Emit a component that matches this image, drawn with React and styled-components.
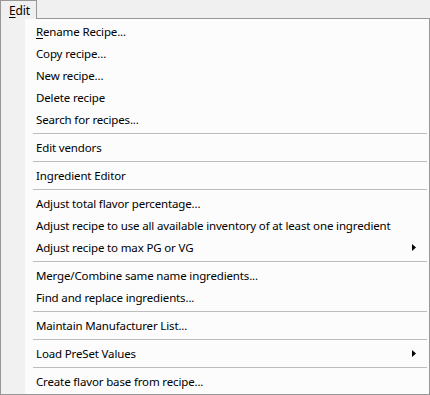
import React from "react";
import styled, { createGlobalStyle } from "styled-components";

const Global = createGlobalStyle`
  html, body { margin: 0; padding: 0; background: #f0f0f0; }
  body {
    font-family: "Noto Sans", "Open Sans", sans-serif;
    font-size: 11.5px;
    letter-spacing: -0.15px;
    color: #000;
  }
`;

const Frame = styled.div`
  width: 430px;
  height: 395px;
  display: flex;
  flex-direction: column;
  background: #f0f0f0;
`;

const MenuBar = styled.div`
  height: 19px;
  display: flex;
  align-items: stretch;
  background: #f0f0f0;
`;

const BarItem = styled.div`
  width: 37px;
  box-sizing: border-box;
  border-left: 1px solid #979797;
  border-right: 1px solid #979797;
  border-top: 1px solid #979797;
  background: #f0f0f0;
  display: flex;
  align-items: center;
  padding-left: 8px;
  line-height: 17px;
  font-size: 12px;
`;

const Rest = styled.div`
  flex: 1;
  border-bottom: 1px solid #979797;
`;

const Panel = styled.div`
  flex: 1;
  box-sizing: border-box;
  border: 1px solid #979797;
  border-top: none;
  padding: 1px;
  background: linear-gradient(to right, #f1f1f1 0, #f1f1f1 24px, #fcfcfc 24px);
  display: flex;
  flex-direction: column;
`;

const Item = styled.div`
  height: 22px;
  display: flex;
  align-items: center;
  padding-left: 34px;
  padding-right: 12px;
  white-space: nowrap;
`;

const Label = styled.span`
  flex: 1;
`;

const U = styled.span`
  text-decoration: underline;
  text-underline-offset: 2px;
`;

const Sep = styled.div`
  height: 6px;
  display: flex;
  align-items: center;
  padding-left: 31px;
  padding-right: 1px;
  &::after {
    content: "";
    flex: 1;
    height: 1px;
    background: #bdbdbd;
  }
`;

const Arrow = styled.svg`
  width: 4px;
  height: 7px;
`;

const SubArrow = () => (
  <Arrow viewBox="0 0 4 7">
    <path d="M0 0 L4 3.5 L0 7 Z" fill="#000" />
  </Arrow>
);

const groups = [
  [
    { label: <><U>R</U>ename Recipe...</> },
    { label: "Copy recipe..." },
    { label: "New recipe..." },
    { label: "Delete recipe" },
    { label: "Search for recipes..." },
  ],
  [{ label: "Edit vendors" }],
  [{ label: "Ingredient Editor" }],
  [
    { label: "Adjust total flavor percentage..." },
    { label: "Adjust recipe to use all available inventory of at least one ingredient" },
    { label: "Adjust recipe to max PG or VG", sub: true },
  ],
  [
    { label: "Merge/Combine same name ingredients..." },
    { label: "Find and replace ingredients..." },
  ],
  [{ label: "Maintain Manufacturer List..." }],
  [{ label: "Load PreSet Values", sub: true }],
  [{ label: "Create flavor base from recipe..." }],
];

export default function App() {
  return (
    <>
      <Global />
      <Frame>
        <MenuBar>
          <BarItem>
            <span><U>E</U>dit</span>
          </BarItem>
          <Rest />
        </MenuBar>
        <Panel>
          {groups.map((g, gi) => (
            <React.Fragment key={gi}>
              {gi > 0 && <Sep />}
              {g.map((it, ii) => (
                <Item key={ii}>
                  <Label>{it.label}</Label>
                  {it.sub && <SubArrow />}
                </Item>
              ))}
            </React.Fragment>
          ))}
        </Panel>
      </Frame>
    </>
  );
}
